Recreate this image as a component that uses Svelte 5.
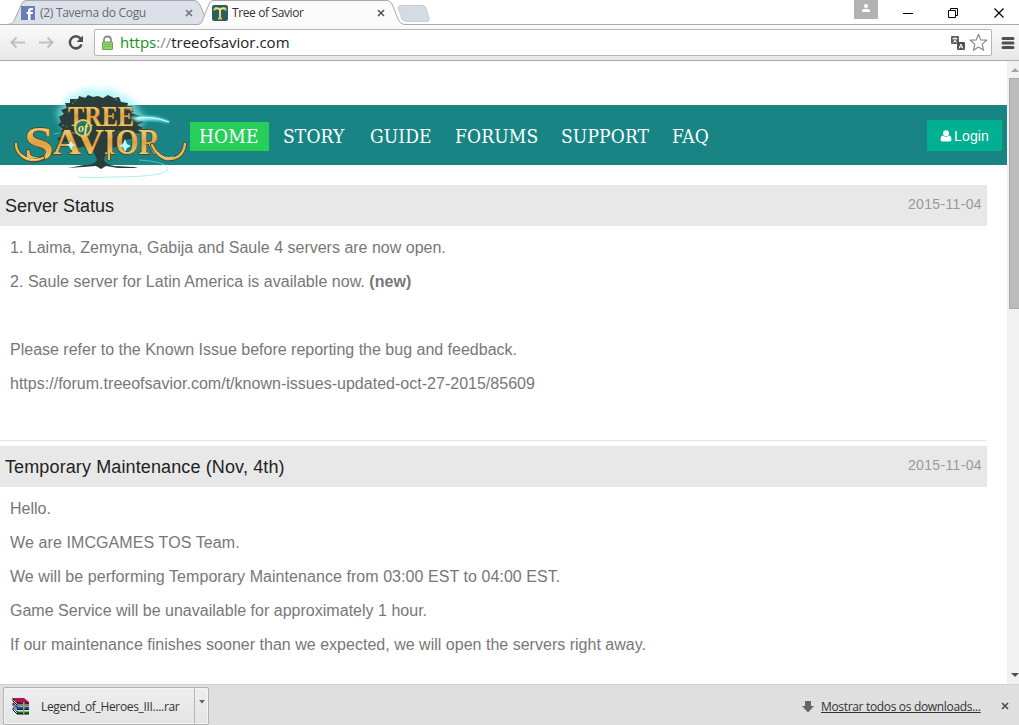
<script>
  const nav = [
    { label: 'HOME', width: 79, active: true },
    { label: 'STORY', width: 82 },
    { label: 'GUIDE', width: 80 },
    { label: 'FORUMS', width: 101 },
    { label: 'SUPPORT', width: 106 },
    { label: 'FAQ', width: 58 }
  ];
  const posts = [
    {
      title: 'Server Status',
      date: '2015-11-04',
      lines: [
        { text: '1. Laima, Zemyna, Gabija and Saule 4 servers are now open.', track: 0 },
        { text: '2. Saule server for Latin America is available now. ', strong: '(new)', track: 0.035 },
        { text: '', track: 0 },
        { text: 'Please refer to the Known Issue before reporting the bug and feedback.', track: 0 },
        { text: 'https://forum.treeofsavior.com/t/known-issues-updated-oct-27-2015/85609', track: 0.015 },
        { text: '', track: 0 }
      ]
    },
    {
      title: 'Temporary Maintenance (Nov, 4th)',
      date: '2015-11-04',
      titleTrack: 0.12,
      lines: [
        { text: 'Hello.', track: 0 },
        { text: 'We are IMCGAMES TOS Team.', track: 0.1 },
        { text: 'We will be performing Temporary Maintenance from 03:00 EST to 04:00 EST.', track: 0.06 },
        { text: 'Game Service will be unavailable for approximately 1 hour.', track: 0.015 },
        { text: 'If our maintenance finishes sooner than we expected, we will open the servers right away.', track: 0.015 }
      ]
    }
  ];
</script>

<div class="window">
  <div class="tabstrip">
    <div class="tab back">
      <svg class="shape" width="206" height="25" viewBox="0 0 206 25">
        <path d="M0 24.5C5 24.5 7 23 9 19L15 5Q17 .5 20 .5H188Q192 .5 194 5L200 19Q202 24.5 206 24.5Z" fill="#dce0e8" stroke="#a6a8ac" />
      </svg>
      <svg class="fav" width="16" height="16" viewBox="0 0 16 16">
        <rect x="1" y="1" width="14" height="14" fill="#687eb8" />
        <path d="M8 15V9H6.5V7H8V5.5Q8 3 11 3H13V5H11.5Q10.5 5 10.5 6V7H13L12.7 9H10.5V15Z" fill="#fff" />
      </svg>
      <span class="name one">(2) Taverna do Cogu</span>
      <svg class="x" width="8" height="8" viewBox="0 0 8 8"><path d="M1 1L7 7M7 1L1 7" stroke="#707378" stroke-width="1.6" /></svg>
    </div>
    <div class="tab front">
      <svg class="shape" width="208" height="25" viewBox="0 0 208 25">
        <path d="M0 25C3 24 4 22 5 19L11 4Q12.5 .5 15 .5H189Q192 .5 194 4L200 19Q202 24.5 207 24.5V25Z" fill="#fbfbfb" />
        <path d="M0 24.5C3 24 4 22 5 19L11 4Q12.5 .5 15 .5H189Q192 .5 194 4L200 19Q202 24.5 208 24.5" fill="none" stroke="#a8a8a8" />
      </svg>
      <svg class="fav" width="16" height="16" viewBox="0 0 16 16">
        <rect width="16" height="16" rx="2" fill="#28605f" />
        <path d="M2.500 5.500Q2 3 4.500 3Q6 3.500 8 4Q10 3.500 11.500 3Q14 3 13.500 5.500M8 4V13.500M6 13.500H10" fill="none" stroke="#e2bd55" stroke-width="2" />
        <path d="M3 4Q5 3 8 4.500Q11 3 13 4M8 5V12" fill="none" stroke="#fff3ae" stroke-width="1" />
      </svg>
      <span class="name two">Tree of Savior</span>
      <svg class="x" width="8" height="8" viewBox="0 0 8 8"><path d="M1 1L7 7M7 1L1 7" stroke="#555" stroke-width="1.6" /></svg>
    </div>
    <svg class="newtab" width="34" height="18" viewBox="0 0 34 18">
      <path d="M4 .5H26Q28 .5 29 3L32 13Q33 16.5 30 16.5H9Q6 16.5 5 14L1.5 4Q.5 .5 4 .5Z" fill="#d5dbe4" stroke="#c9cdd4" />
    </svg>
    <div class="controls">
      <svg width="165" height="24" viewBox="0 0 165 24">
        <rect width="24" height="19" fill="#b2b2b2" />
        <circle cx="12" cy="6" r="2" fill="#fff" /><path d="M8 12V10.5Q8 9 10 9H14Q16 9 16 10.5V12Z" fill="#fff" />
        <path d="M49 13.5H59" stroke="#000" />
        <path d="M94.500 10.500H101.500V17.500H94.500ZM96.500 10V8.500H103.500V15.500H102" fill="none" stroke="#000" />
        <path d="M140.500 8.500L149.500 17.500M149.500 8.500L140.500 17.500" stroke="#000" stroke-width="1.2" />
      </svg>
    </div>
  </div>

  <div class="toolbar">
    <svg class="navicons" width="94" height="35" viewBox="0 0 94 35">
      <path d="M25 17.500H12M16.500 12.500L11.500 17.500L16.500 22.500" fill="none" stroke="#c1c1c1" stroke-width="2.200" />
      <path d="M39 17.500H52M47.500 12.500L52.500 17.500L47.500 22.500" fill="none" stroke="#c1c1c1" stroke-width="2.200" />
      <path d="M80.500 13.500A6 6 0 1 0 81.500 19.500" fill="none" stroke="#505050" stroke-width="2.500" />
      <path d="M83 10.500V17H76.500Z" fill="#505050" />
    </svg>
    <div class="address">
      <svg width="13" height="16" viewBox="0 0 13 16">
        <path d="M3 8V5Q3 1.500 6.500 1.500T10 5V8" fill="none" stroke="#8a8a8a" stroke-width="1.800" />
        <rect x="1.500" y="7" width="10" height="7.500" rx=".5" fill="#91d36e" stroke="#62ac45" />
        <path d="M2.500 9.500H10.500M2.500 11.500H10.500" stroke="#74bd55" />
      </svg>
      <span class="url"><b>https</b><i>://</i>treeofsavior.com</span>
      <svg class="translate" width="14" height="14" viewBox="0 0 14 14">
        <rect width="8" height="8" rx="1" fill="#606060" />
        <path d="M1.500 2.500H6.500M4 1V2.500M2 6.500Q5 5 5.500 2.500M2.500 3Q3.500 5.500 6 6.500" fill="none" stroke="#fff" stroke-width=".8" />
        <rect x="6" y="6" width="8" height="8" rx="1" fill="#505050" />
        <path d="M8 12.500L10 8L12 12.500M8.700 11H11.300" fill="none" stroke="#fff" />
      </svg>
      <svg width="19" height="19" viewBox="0 0 19 19">
        <path d="M9.500 1.300L11.700 6.900L17.700 7.200L13.200 11.100L14.600 17.200L9.500 14L4.400 17.200L5.800 11.100L1.300 7.200L7.300 6.900Z" fill="#fff" stroke="#898989" stroke-width="1.200" stroke-linejoin="round" />
      </svg>
    </div>
    <svg class="menu" width="14" height="14" viewBox="0 0 14 14"><path d="M2 2.500H12M2 7H12M2 11.500H12" stroke="#505050" stroke-width="3" stroke-linecap="round" /></svg>
  </div>

  <div class="viewport">
    <main>
      <header>
        <div class="logo">
          <svg width="190" height="100" viewBox="0 0 190 100">
            <defs>
              <linearGradient id="gold" x1="0" y1="0" x2="0" y2="1">
                <stop offset="0" stop-color="#ffe68b" /><stop offset=".5" stop-color="#dfa043" /><stop offset="1" stop-color="#ffdf74" />
              </linearGradient>
              <filter id="glow" x="-30%" y="-30%" width="160%" height="160%"><feGaussianBlur stdDeviation="3" /></filter>
              <filter id="soft" x="-20%" y="-80%" width="140%" height="260%"><feGaussianBlur stdDeviation="1" /></filter>
            </defs>
            <path d="M60 42Q52 30 64 24Q66 13 78 13Q88 5 99 11Q111 5 121 15Q136 17 138 29Q148 37 141 47Q131 55 122 50L109 63L65 52Z" fill="#94f1f2" opacity=".65" filter="url(#glow)" />
            <path d="M63 49L58 45L61 42L59 37L64 34L61 30L67 28L65 23L70 23L70 19L78 19L79 16L85 18L88 15L93 17L98 16L103 18L108 15L114 18L119 17L121 22L128 23L127 27L124 29L134 31L131 33L140 36L138 39L144 42L137 45L143 48L137 50L141 53L132 54L136 58L125 60L120 66L112 68Q105 73 104 80Q106 85 115 86L134 87L138 88L118 88L106 86L101 89L96 86L83 87L68 88L84 85Q95 85 97 80L91 65L77 68L70 62L61 63L57 58L64 56L59 53Z" fill="#293e3b" />
            <path d="M72 24L76 20M83 17L86 18M115 19L119 21M125 27L129 26M78 54L87 62M112 57L119 51M62 45L67 47" stroke="#609b91" stroke-dasharray="2 2" />
            <path d="M54 54Q69 50 90 56M139 80Q168 82 168 89Q165 97 112 97Q91 98 78 97" fill="none" stroke="#72e5e7" opacity=".6" />
            <path d="M131 38Q152 34 169 42Q151 38 137 41" fill="#bdffff" stroke="#64dfe4" stroke-width="2" filter="url(#soft)" />
            <path d="M137 38Q154 36 169 42" fill="none" stroke="#e6ffff" />
            <g class="logotype">
              <text x="68" y="46" font-size="29" textLength="66" lengthAdjust="spacingAndGlyphs">TREE</text>
              <text x="24" y="80" font-size="49" textLength="30" lengthAdjust="spacingAndGlyphs">S</text>
              <text x="53" y="74" font-size="36" textLength="51" lengthAdjust="spacingAndGlyphs">AV</text>
              <text x="104" y="74" font-size="36" textLength="56" lengthAdjust="spacingAndGlyphs">IOR</text>
            </g>
            <g fill="none" stroke-linecap="round">
              <path d="M43 78Q31 84 22 76Q16 71 16 64M152 65Q157 76 166 79Q183 80 185 64M109 74V79" stroke="#3e4b35" stroke-width="4.200" />
              <path d="M43 78Q31 83 22 76Q16 71 16 64M152 65Q157 76 166 79Q183 80 185 64M109 72V79" stroke="#e8b653" stroke-width="2.400" />
              <path d="M39 79Q29 81 22 75M157 72Q164 80 173 77" stroke="#fff0a2" stroke-width=".8" />
            </g>
            <circle cx="83" cy="48" r="8" fill="#267865" stroke="#e7c55c" stroke-width="2" />
            <text class="of" x="78" y="52" font-size="12">of</text>
            <path d="M71 61L73 64L76 65L73 66L71 70L69 66L66 65L69 64ZM125 59L127 64L131 66L127 68L125 72L123 67L119 66L123 64Z" fill="#b8ffff" />
          </svg>
        </div>
        <nav>
          {#each nav as item}
            <span class="item" class:active={item.active} style="width:{item.width}px">{item.label}</span>
          {/each}
        </nav>
        <span class="login">
          <svg width="12" height="12" viewBox="0 0 12 12"><circle cx="6" cy="3.200" r="3" fill="#fff" /><path d="M3 5.500Q6 8 9 5.500Q11.500 6 11.500 9.500Q11.500 11.500 9.500 11.500H2.500Q.5 11.500 .5 9.500Q.5 6 3 5.500Z" fill="#fff" /></svg>
          Login
        </span>
      </header>
      {#each posts as post}
        <article>
          <div class="heading"><h2 style="letter-spacing:{post.titleTrack ?? 0}px">{post.title}</h2><time>{post.date}</time></div>
          <div class="body">
            {#each post.lines as line}
              <p style="letter-spacing:{line.track}px">{line.text}{#if line.strong}<strong>{line.strong}</strong>{/if}</p>
            {/each}
          </div>
        </article>
      {/each}
    </main>
    <div class="scrollbar">
      <svg width="12" height="17" viewBox="0 0 12 17"><path d="M4 11H12L8 7Z" fill="#a3a3a3" /></svg>
      <div class="thumb"></div>
      <svg class="down" width="12" height="17" viewBox="0 0 12 17"><path d="M4 6H12L8 10Z" fill="#505050" /></svg>
    </div>
  </div>

  <footer>
    <div class="download">
      <svg width="18" height="18" viewBox="0 0 18 18">
        <path d="M1 1H12L17 5H5Z" fill="#a31a55" /><path d="M5 5H17V7H5L1 3V1Z" fill="#6b0c36" />
        <path d="M1 5L5 9H17V12H5L1 8Z" fill="#2649a0" /><path d="M6 9H17V10H6Z" fill="#62b8e8" />
        <path d="M1 10L5 14H17V17H5L1 13Z" fill="#145d43" /><path d="M6 14H17V15H6Z" fill="#48cf82" />
        <path d="M1 3.500L4.500 7.500M1 8L4.500 12M1 12L4.500 16" fill="none" stroke="#fff" stroke-width="1.300" />
        <path d="M1 1V4L5 8H17M1 6V8.500L5 12.500H17M1 11V13L5 17H17" fill="none" stroke="#111" /><path d="M11 5H12.500V17H11Z" fill="#be9b46" />
      </svg>
      <span class="filename">Legend_of_Heroes_III....rar</span>
      <span class="drop"><svg width="6" height="4" viewBox="0 0 6 4"><path d="M0 0H6L3 3.500Z" fill="#666" /></svg></span>
    </div>
    <svg class="arrow" width="12" height="13" viewBox="0 0 12 13"><path d="M3 1H9V6H12L6 12.500L0 6H3Z" fill="#666" /></svg>
    <span class="all">Mostrar todos os downloads...</span>
    <svg width="8" height="8" viewBox="0 0 8 8"><path d="M1 1L7 7M7 1L1 7" stroke="#505050" stroke-width="1.700" /></svg>
  </footer>
</div>

<style>
  :global(body) { margin: 0; background: #fff; overflow: hidden; }
  * { box-sizing: border-box; }
  svg { display: block; flex: none; }
  .window { width: 1019px; height: 725px; display: flex; flex-direction: column; overflow: hidden; font-family: "Liberation Sans", Arial, sans-serif; }
  .tabstrip { height: 25px; display: flex; border-bottom: 1px solid #a8a8a8; flex: none; padding-left: 6px; }
  .tab { position: relative; height: 25px; display: flex; align-items: center; flex: none; }
  .back { width: 192px; padding-left: 14px; }
  .front { width: 200px; padding-left: 14px; z-index: 1; }
  .shape { position: absolute; left: 0; top: 0; }
  .fav, .name, .x { position: relative; }
  .name { font: 12px/16px "Open Sans", sans-serif; margin-left: 4px; white-space: nowrap; color: #333; }
  .one { width: 145px; color: #666a70; letter-spacing: -.29px; }
  .two { width: 145px; letter-spacing: -.38px; }
  .newtab { margin-top: 5px; margin-left: -1px; }
  .controls { margin-left: auto; }
  .toolbar { height: 36px; flex: none; display: flex; align-items: center; background: linear-gradient(#fafafa, #e8e8e8); border-bottom: 1px solid #aaa; }
  .address { height: 27px; width: 898px; border: 1px solid #b6b6b6; border-radius: 2px; background: #fff; display: flex; align-items: center; padding: 0 3px 0 6px; }
  .url { font: 15px/22px "Open Sans", sans-serif; margin-left: 6px; margin-top: -2px; color: #222; }
  .url b { font-weight: 400; color: #159015; }
  .url i { font-style: normal; color: #888; }
  .translate { margin-left: auto; margin-right: 4px; }
  .menu { margin-left: 9px; }
  .viewport { height: 623px; display: flex; flex: none; }
  main { width: 1007px; padding-top: 44px; overflow: hidden; background: #fff; }
  header { height: 60px; background: #188584; display: flex; align-items: center; padding-right: 5px; margin-bottom: 20px; }
  .logo { width: 190px; height: 60px; flex: none; }
  .logo svg { margin-top: -25px; overflow: visible; position: relative; }
  .logotype { font-family: "Liberation Serif", serif; font-weight: 700; fill: url(#gold); stroke: #4b3d1d; stroke-width: 1.3px; paint-order: stroke; }
  .of { font-family: "Liberation Serif", serif; font-weight: 700; font-style: italic; fill: #ffe683; }
  nav { display: flex; gap: 5px; padding-top: 2px; }
  .item { height: 29px; padding-left: 9px; font-family: "DejaVu Serif Condensed", "DejaVu Serif", serif; font-stretch: condensed; font-size: 19px; letter-spacing: .15px; line-height: 28px; color: #fff; white-space: nowrap; }
  .active { background: #27cf58; }
  .login { width: 75px; height: 31px; margin-left: auto; margin-top: 1px; background: #01b091; color: #fff; display: flex; align-items: center; justify-content: center; gap: 2px; font-size: 14px; letter-spacing: .1px; padding-top: 1px; }
  article { width: 987px; }
  article + article { margin-top: 5px; }
  .heading { height: 41px; display: flex; justify-content: space-between; background: #e8e8e8; padding: 0 5px; }
  h2 { margin: 0; font-size: 18px; line-height: 43px; font-weight: 400; color: #222; }
  time { font-size: 14px; line-height: 38px; color: #999; letter-spacing: .35px; }
  .body { padding: 10px; border-bottom: 1px solid #e8e8e8; height: 215px; }
  p { height: 24px; margin: 0 0 10px; font-size: 16px; line-height: 24px; color: #777; white-space: pre; }
  .scrollbar { width: 12px; background: #f1f1f1; display: flex; flex-direction: column; }
  .thumb { height: 231px; margin-left: 2px; background: #bcbcbc; border: 1px solid #a8a8a8; border-right: 0; }
  .down { margin-top: auto; }
  footer { height: 41px; display: flex; align-items: center; background: #dfdfdf; border-top: 1px solid #d2d2d2; padding: 2px 10px 0 3px; }
  .download { width: 206px; height: 38px; border: 1px solid #b2b2b2; border-radius: 2px; background: linear-gradient(#eee, #e4e4e4); display: flex; align-items: center; padding-left: 8px; box-shadow: inset 0 0 0 1px #f5f5f5; }
  .filename, .all { font: 12px/18px "Open Sans", sans-serif; letter-spacing: -.33px; white-space: nowrap; color: #333; padding-top: 1px; }
  .filename { margin-left: 11px; }
  .drop { margin-left: auto; width: 14px; height: 36px; border-left: 1px solid #b6b6b6; padding: 12px 0 0 4px; }
  .arrow { margin-left: auto; margin-right: 7px; }
  .all { text-decoration: underline; width: 160px; margin-right: 20px; }
</style>
